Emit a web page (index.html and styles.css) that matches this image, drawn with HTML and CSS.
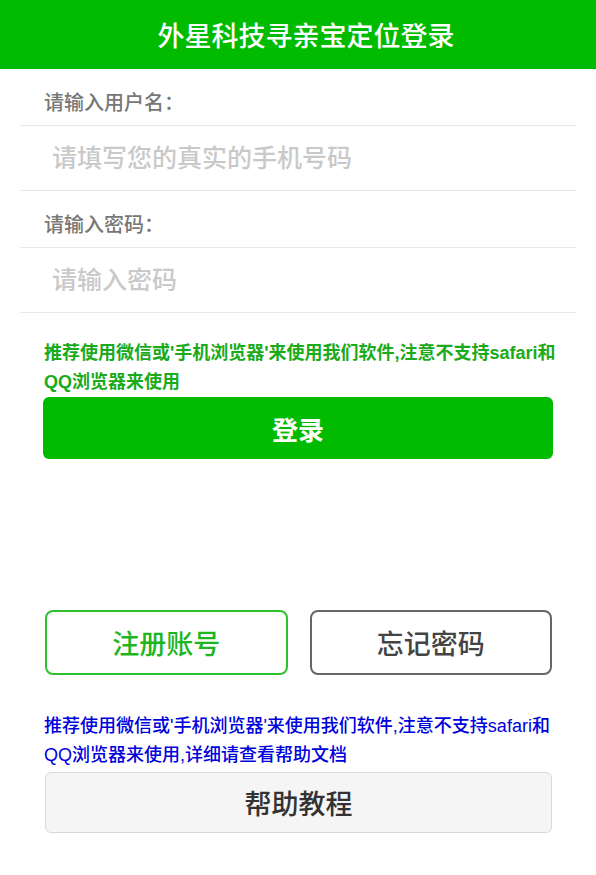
FILE: index.html
```html
<!DOCTYPE html>
<html lang="zh-CN">
<head>
<meta charset="utf-8">
<title>外星科技寻亲宝定位登录</title>
<link rel="stylesheet" href="styles.css">
</head>
<body>
<header class="topbar">外星科技寻亲宝定位登录</header>
<div class="form">
  <div class="label-row">请输入用户名：</div>
  <div class="input-row"><input class="field" type="text" placeholder="请填写您的真实的手机号码"></div>
  <div class="label-row">请输入密码：</div>
  <div class="input-row"><input class="field" type="password" placeholder="请输入密码"></div>
</div>
<p class="tip tip-green">推荐使用微信或'手机浏览器'来使用我们软件,注意不支持safari和QQ浏览器来使用</p>
<button class="btn-login" type="button">登录</button>
<div class="btn-pair">
  <button class="btn-outline btn-register" type="button">注册账号</button>
  <button class="btn-outline btn-forget" type="button">忘记密码</button>
</div>
<p class="tip tip-blue">推荐使用微信或'手机浏览器'来使用我们软件,注意不支持safari和QQ浏览器来使用,详细请查看帮助文档</p>
<button class="btn-help" type="button">帮助教程</button>
</body>
</html>
```
FILE: styles.css
```css
* { box-sizing: border-box; }
body {
  margin: 0;
  background: #fff;
  font-family: "Liberation Sans", "Noto Sans CJK SC", sans-serif;
}
.topbar {
  height: 69px;
  background: #00bb00;
  color: #fff;
  font-size: 27px;
  font-weight: 500;
  display: flex;
  align-items: center;
  justify-content: center;
  padding: 0 0 1px 16px;
}
.form {
  margin: 0 20px;
}
.label-row {
  padding: 23px 24px 10px;
  line-height: 23px;
  font-size: 20px;
  font-weight: 500;
  color: #777;
  border-bottom: 1px solid #e8e8e8;
}
.input-row {
  height: 65px;
  border-bottom: 1px solid #e8e8e8;
  display: flex;
  align-items: center;
}
.field {
  border: none;
  outline: none;
  background: transparent;
  width: 100%;
  padding: 0 0 0 32px;
  font-family: inherit;
  font-size: 25px;
  font-weight: 500;
  color: #333;
}
.field::placeholder { color: #c9c9c9; }
.tip {
  margin: 0 20px 0 44px;
  font-size: 18px;
  line-height: 28.5px;
}
.tip-green {
  padding-top: 26px;
  color: #1aaa1a;
  font-weight: bold;
}
.tip-blue {
  margin-top: 37px;
  color: #0000dd;
  font-weight: 500;
}
.btn-login {
  display: block;
  margin: 1px 43px 0;
  width: 510px;
  height: 62px;
  border: none;
  border-radius: 6px;
  background: #00bb00;
  color: #fff;
  font-family: inherit;
  font-size: 26px;
  font-weight: bold;
}
.btn-pair {
  display: flex;
  gap: 22px;
  margin: 151px 44px 0 45px;
}
.btn-outline {
  flex: 1;
  height: 65px;
  border-radius: 8px;
  background: #fff;
  font-family: inherit;
  font-size: 27px;
  font-weight: 500;
}
.btn-register {
  border: 2px solid #2ec12e;
  color: #1eb51e;
}
.btn-forget {
  border: 2px solid #666;
  color: #444;
}
.btn-help {
  display: block;
  margin: 3px 44px 0 45px;
  width: 507px;
  height: 61px;
  border: 1px solid #d8d8d8;
  border-radius: 6px;
  background: #f5f5f5;
  color: #333;
  font-family: inherit;
  font-size: 27px;
  font-weight: 500;
}
```
